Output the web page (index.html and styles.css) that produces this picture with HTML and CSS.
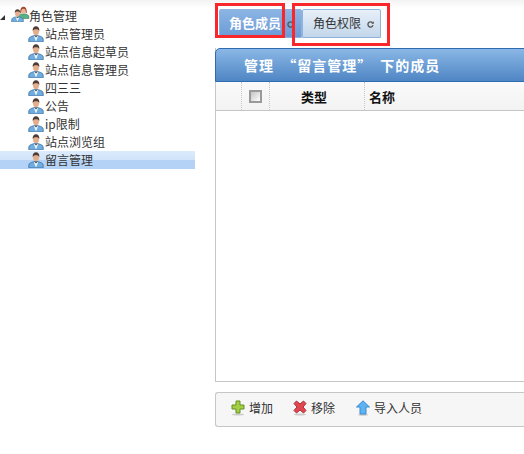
FILE: index.html
```html
<!DOCTYPE html>
<html lang="zh-CN">
<head>
<meta charset="UTF-8" />
<title>角色管理</title>
<link rel="stylesheet" href="styles.css">
</head>
<body>

<svg class="defs" width="0" height="0">
  <symbol id="user" viewBox="0 0 16 16">
    <path d="M.8 15.800v-2.600c0-1.700 1.700-2.800 5.200-3.500h4c3.500.7 5.200 1.800 5.200 3.500v2.600z" fill="#6fade0" stroke="#3b6f9f" stroke-width=".8"/>
    <path d="M5.800 10l2.200 5.500L10.200 10z" fill="#f2f8fc"/>
    <path d="M6.200 9.800h3.600L8 11.500z" fill="#4a5560"/>
    <ellipse cx="8" cy="5.200" rx="3" ry="3.900" fill="#e4ae8c"/>
    <path d="M4.700 5.200C4.300 1.800 6 .2 8 .2s3.700 1.600 3.300 5c-.6-1.500-1.300-2-3.300-2s-2.700.5-3.300 2z" fill="#4e3b33"/>
  </symbol>
  <symbol id="user-red" viewBox="0 0 16 16">
    <path d="M1.500 15.500v-2.500c0-1.500 1.500-2.500 4.500-3.200h4c3 .7 4.500 1.700 4.500 3.200v2.500z" fill="#58b184" stroke="#2f7f58" stroke-width=".8"/>
    <ellipse cx="8" cy="5.500" rx="3" ry="3.800" fill="#e8b596"/>
    <path d="M4 9C3.500 2.500 6 .8 8 .8s4.500 1.700 4 8.200l-1.200-.5c.4-3-.8-5-2.800-5s-3.200 2-2.800 5z" fill="#a5482f"/>
  </symbol>
</svg>

<div class="page">
  <!-- Role tree -->
  <div class="tree">
    <div class="tree-row root">
      <span class="arrow"></span>
      <span class="group-icon">
        <svg class="back" width="13" height="13"><use href="#user-red"/></svg>
        <svg class="front" width="13" height="13"><use href="#user"/></svg>
      </span>
      <span>角色管理</span>
    </div>
    <div class="tree-row"><svg width="16" height="16"><use href="#user"/></svg><span>站点管理员</span></div>
    <div class="tree-row"><svg width="16" height="16"><use href="#user"/></svg><span>站点信息起草员</span></div>
    <div class="tree-row"><svg width="16" height="16"><use href="#user"/></svg><span>站点信息管理员</span></div>
    <div class="tree-row"><svg width="16" height="16"><use href="#user"/></svg><span>四三三</span></div>
    <div class="tree-row"><svg width="16" height="16"><use href="#user"/></svg><span>公告</span></div>
    <div class="tree-row"><svg width="16" height="16"><use href="#user"/></svg><span>ip限制</span></div>
    <div class="tree-row"><svg width="16" height="16"><use href="#user"/></svg><span>站点浏览组</span></div>
    <div class="tree-row selected"><svg width="16" height="16"><use href="#user"/></svg><span>留言管理</span></div>
  </div>

  <div class="main">
    <!-- Tabs -->
    <div class="tabs">
      <div class="tab active">角色成员<svg class="reload" width="7" height="7" viewBox="0 0 7 7"><path d="M5.800 2.200A2.600 2.600 0 1 0 6 4.300" fill="none" stroke="#555" stroke-width="1.300"/><path d="M4.300 2.800h2.500V.3z" fill="#555"/></svg></div>
      <div class="tab">角色权限<svg class="reload" width="7" height="7" viewBox="0 0 7 7"><path d="M5.800 2.200A2.600 2.600 0 1 0 6 4.300" fill="none" stroke="#555" stroke-width="1.300"/><path d="M4.300 2.800h2.500V.3z" fill="#555"/></svg></div>
    </div>
    <div class="mark mark-one"></div>
    <div class="mark mark-two"></div>

    <!-- Member grid -->
    <div class="panel">
      <div class="panel-title">管理 “留言管理” 下的成员</div>
      <div class="grid-head">
        <div class="cell cell-index"></div>
        <div class="cell cell-check"><span class="checkbox"></span></div>
        <div class="cell cell-type">类型</div>
        <div class="cell cell-name">名称</div>
      </div>
      <div class="grid-body"></div>
    </div>

    <!-- Actions -->
    <div class="toolbar">
      <div class="tool">
        <svg width="14" height="16" viewBox="0 0 14 16"><ellipse cx="7" cy="14.500" rx="6" ry="1" fill="#ccc"/><path d="M5 1h4v4h4v4H9v4H5V9H1V5h4z" fill="#a3cf45" stroke="#668f22"/></svg>
        <span>增加</span>
      </div>
      <div class="tool">
        <svg width="14" height="16" viewBox="0 0 14 16"><ellipse cx="7" cy="14.500" rx="6" ry="1" fill="#ccc"/><path d="M3.500 1L7 4l3.500-3L13 3.500 10 7l3 3.500-2.500 2.500L7 10l-3.500 3L1 10.500 4 7 1 3.500z" fill="#e2474f" stroke="#a8323a"/></svg>
        <span>移除</span>
      </div>
      <div class="tool tool-last">
        <svg width="14" height="16" viewBox="0 0 14 16"><ellipse cx="7" cy="14.800" rx="5" ry="1" fill="#ccc"/><path d="M7 .8L13.500 7H10v7H4V7H.5z" fill="#5db2f2" stroke="#3d8bd0"/></svg>
        <span>导入人员</span>
      </div>
    </div>
  </div>
</div>

</body>
</html>
```

FILE: styles.css
```css
body {
  margin: 0;
  font-family: "Noto Sans CJK SC", "Liberation Sans", sans-serif;
  font-size: 12px;
  color: #333;
  background: #fff;
}

.defs {
  position: absolute;
}

.page {
  display: flex;
  height: 454px;
  overflow: hidden;
  background: linear-gradient(#f3f3f3, #fff 8px);
}

/* Tree */
.tree {
  width: 195px;
  padding-top: 7px;
  margin-right: 20px;
  flex-shrink: 0;
}
.tree-row {
  height: 18px;
  padding-left: 28px;
  display: flex;
  align-items: center;
  gap: 1px;
  line-height: 18px;
}
.tree-row.root {
  padding-left: 0;
  gap: 0;
}
.tree-row.selected {
  background: linear-gradient(#dcebfc 0, #cfe3fa 50%, #b4d2f6 50%, #b4d2f6 100%);
}
.arrow {
  width: 0;
  height: 0;
  border-left: 5px solid transparent;
  border-bottom: 5px solid #333;
  margin: 2px 6px 0 0;
}
.group-icon {
  position: relative;
  width: 16px;
  height: 16px;
  margin-right: 2px;
}
.group-icon svg {
  position: absolute;
}
.group-icon .back {
  left: 6px;
  top: -2px;
}
.group-icon .front {
  left: 0;
  top: 1px;
}

/* Right side */
.main {
  position: relative;
  flex: 1;
  padding-top: 9px;
  min-width: 0;
}
.tabs {
  display: flex;
  padding-left: 4px;
  height: 29px;
}
.tab {
  width: 79px;
  box-sizing: border-box;
  border: 1px solid #8fb3dc;
  border-radius: 2px 2px 0 0;
  padding-left: 10px;
  line-height: 25px;
  background: linear-gradient(#e8f0f9, #c2d6ea);
  color: #333;
}
.tab.active {
  width: 83px;
  padding-left: 9px;
  background: linear-gradient(#8cb5e4, #6b9ad6);
  color: #fff;
  font-size: 13px;
  font-weight: bold;
}
.reload {
  margin-left: 6px;
}
.mark {
  position: absolute;
  border: 3px solid #f9272b;
  box-sizing: border-box;
  pointer-events: none;
}
.mark-one {
  left: 0;
  top: 3px;
  width: 70px;
  height: 35px;
}
.mark-two {
  left: 77px;
  top: 3px;
  width: 98px;
  height: 43px;
}

.panel {
  margin-top: 10px;
  width: 330px;
  height: 334px;
  box-sizing: border-box;
  border-left: 1px solid #c6c6c6;
  border-bottom: 1px solid #c6c6c6;
  display: flex;
  flex-direction: column;
}
.panel-title {
  height: 34px;
  margin-left: -1px;
  box-sizing: border-box;
  border: 1px solid #2d6cb0;
  border-radius: 5px 0 0 0;
  padding-left: 28px;
  line-height: 32px;
  font-size: 14px;
  font-weight: bold;
  letter-spacing: 1px;
  word-spacing: 4px;
  color: #fff;
  background: linear-gradient(#8ab7e6, #4f86c4);
}
.grid-head {
  height: 29px;
  box-sizing: border-box;
  display: flex;
  border-bottom: 1px solid #c6c6c6;
  background: linear-gradient(#fafafa, #f3f3f3);
  font-size: 13px;
  font-weight: bold;
  color: #111;
}
.cell {
  display: flex;
  align-items: center;
  justify-content: center;
  border-right: 1px dotted #c6c6c6;
  box-sizing: border-box;
}
.cell-index {
  width: 26px;
}
.cell-check {
  width: 28px;
}
.cell-type {
  width: 95px;
  padding-right: 6px;
}
.cell-name {
  flex: 1;
  justify-content: flex-start;
  padding-left: 4px;
  border-right: none;
}
.checkbox {
  width: 9px;
  height: 9px;
  border: 2px solid #9a9a9a;
  background: linear-gradient(135deg, #c4c4c4, #fff);
}
.grid-body {
  flex: 1;
  background: #fff;
}

.toolbar {
  margin-top: 10px;
  width: 330px;
  height: 35px;
  box-sizing: border-box;
  border: 1px solid #c6c6c6;
  border-right: none;
  border-radius: 3px 0 0 3px;
  background: #f6f6f6;
  display: flex;
  align-items: center;
  padding: 0 0 4px 15px;
  gap: 20px;
}
.tool {
  display: flex;
  align-items: center;
  gap: 4px;
}
.tool-last {
  margin-left: 1px;
}
```
